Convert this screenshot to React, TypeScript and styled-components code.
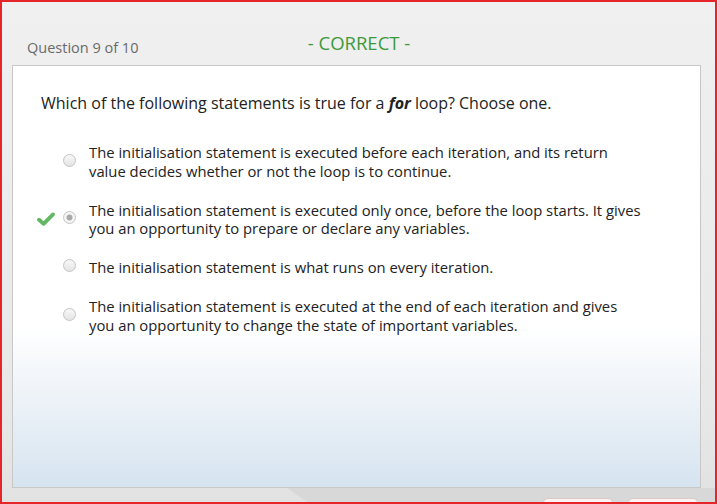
import React from "react";
import styled, { createGlobalStyle } from "styled-components";

const GlobalStyle = createGlobalStyle`
  html, body {
    margin: 0;
    padding: 0;
    background: #ffffff;
  }
  * {
    box-sizing: border-box;
  }
`;

interface Option {
  id: string;
  lines: string[];
  selected?: boolean;
  correct?: boolean;
}

const options: Option[] = [
  {
    id: "a",
    lines: [
      "The initialisation statement is executed before each iteration, and its return",
      "value decides whether or not the loop is to continue.",
    ],
  },
  {
    id: "b",
    lines: [
      "The initialisation statement is executed only once, before the loop starts. It gives",
      "you an opportunity to prepare or declare any variables.",
    ],
    selected: true,
    correct: true,
  },
  {
    id: "c",
    lines: ["The initialisation statement is what runs on every iteration."],
  },
  {
    id: "d",
    lines: [
      "The initialisation statement is executed at the end of each iteration and gives",
      "you an opportunity to change the state of important variables.",
    ],
  },
];

const CheckMark = () => (
  <svg width="18" height="14" viewBox="0 0 18 14">
    <path
      d="M2 7.8 L6.6 11.8 L16 2.4"
      fill="none"
      stroke="#62b862"
      strokeWidth="3.8"
      strokeLinecap="round"
      strokeLinejoin="round"
    />
  </svg>
);

const App: React.FC = () => {
  return (
    <>
      <GlobalStyle />
      <Frame>
        <Header>
          <Counter>Question 9 of 10</Counter>
          <Result>- CORRECT -</Result>
          <span />
        </Header>
        <Card>
          <QuestionText>
            Which of the following statements is true for a <em>for</em> loop?
            Choose one.
          </QuestionText>
          <OptionList>
            {options.map((option) => (
              <OptionRow key={option.id}>
                <Mark>{option.correct && <CheckMark />}</Mark>
                <Radio $selected={option.selected} />
                <OptionText>
                  {option.lines.map((line, i) => (
                    <Line key={i}>{line}</Line>
                  ))}
                </OptionText>
              </OptionRow>
            ))}
          </OptionList>
        </Card>
        <Footer>
          <Ramp />
          <NavButton />
          <NavButton />
        </Footer>
      </Frame>
    </>
  );
};

const Frame = styled.div`
  width: 717px;
  height: 504px;
  border: 2px solid #e4262b;
  background: linear-gradient(#f0f0f0, #e8e8e8 80%, #e2e2e2);
  display: flex;
  flex-direction: column;
  overflow: hidden;
  font-family: "Open Sans", "Noto Sans", sans-serif;
`;

const Header = styled.div`
  height: 63px;
  display: grid;
  grid-template-columns: 1fr auto 1fr;
  align-items: end;
  padding: 0 0 8px 25px;
`;

const Counter = styled.div`
  font-size: 14.5px;
  color: #6a6a6a;
`;

const Result = styled.div`
  font-size: 18.5px;
  color: #3c9a3c;
  padding-bottom: 2px;
  transform: translateX(-12px);
`;

const Card = styled.div`
  margin: 0 14px 0 10px;
  height: 423px;
  border: 1px solid #c8c8c8;
  background: linear-gradient(
    #ffffff 0%,
    #ffffff 62%,
    #eef3f8 78%,
    #d6e4f0 100%
  );
  padding: 26px 28px 0 28px;
`;

const QuestionText = styled.p`
  margin: 0;
  font-size: 16px;
  line-height: 22px;
  color: #222222;

  em {
    font-weight: 700;
    font-style: italic;
  }
`;

const OptionList = styled.div`
  display: flex;
  flex-direction: column;
  gap: 20.5px;
  margin-top: 29px;
`;

const OptionRow = styled.div`
  display: flex;
  align-items: center;
`;

const Mark = styled.div`
  width: 22px;
  margin-left: -4px;
  display: flex;
  align-items: center;
`;

const Radio = styled.span<{ $selected?: boolean }>`
  flex: none;
  width: 13px;
  height: 13px;
  margin: -3px 13px 0 4px;
  border-radius: 50%;
  border: 1px solid #c4c4c4;
  background: ${(p) =>
    p.$selected
      ? "radial-gradient(circle, #a8a8a8 0, #a8a8a8 2.6px, #f4f4f4 3.4px)"
      : "linear-gradient(#f8f8f8, #e4e4e4)"};
`;

const OptionText = styled.div`
  font-size: 14.8px;
  line-height: 18.5px;
  color: #222222;
`;

const Line = styled.div`
  white-space: nowrap;
`;

const Footer = styled.div`
  flex: 1;
  position: relative;
  display: flex;
  align-items: flex-end;
  justify-content: flex-end;
  gap: 15px;
  padding-right: 17px;
`;

const Ramp = styled.div`
  position: absolute;
  left: 285px;
  right: 0;
  top: 0;
  bottom: 0;
  background: #d8d8d8;
  clip-path: polygon(0 0, 100% 0, 100% 100%, 20px 100%);
`;

const NavButton = styled.div`
  position: relative;
  width: 70px;
  height: 5px;
  border: 1px solid #d9c9c9;
  border-bottom: none;
  border-radius: 7px 7px 0 0;
  background: #fbf3f2;
  margin-bottom: -1px;
`;

export default App;
